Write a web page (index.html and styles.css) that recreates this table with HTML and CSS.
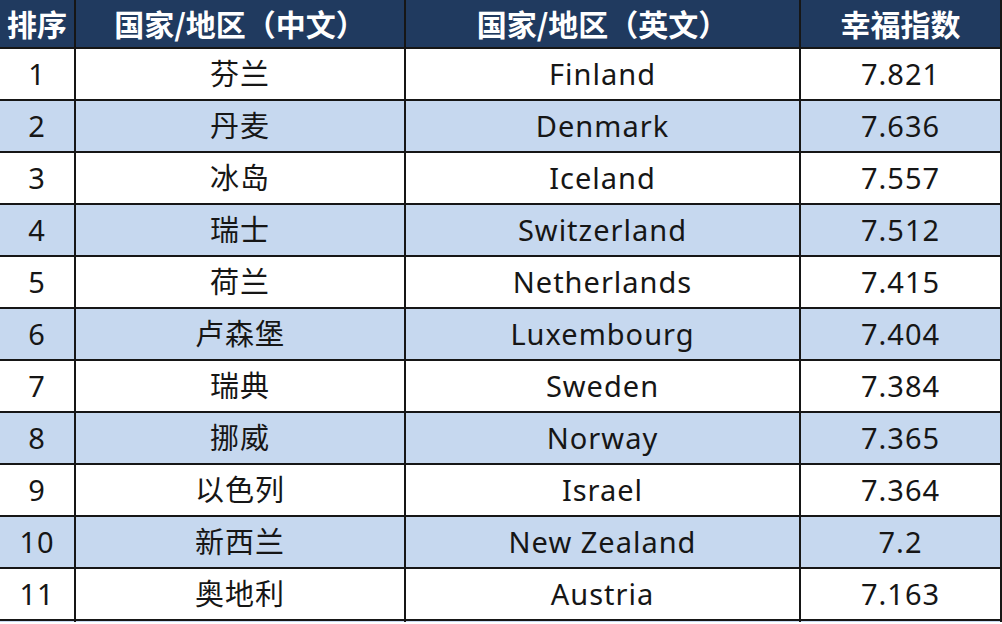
FILE: index.html
```html
<!DOCTYPE html>
<html lang="zh">
<head>
<meta charset="utf-8">
<title>幸福指数</title>
<link rel="stylesheet" href="styles.css">
</head>
<body>
<table class="rank">
  <colgroup>
    <col class="c-rank"><col class="c-cn"><col class="c-en"><col class="c-score">
  </colgroup>
  <thead>
    <tr><th>排序</th><th>国家/地区（中文）</th><th>国家/地区（英文）</th><th>幸福指数</th></tr>
  </thead>
  <tbody>
    <tr><td>1</td><td>芬兰</td><td>Finland</td><td>7.821</td></tr>
    <tr class="alt"><td>2</td><td>丹麦</td><td>Denmark</td><td>7.636</td></tr>
    <tr><td>3</td><td>冰岛</td><td>Iceland</td><td>7.557</td></tr>
    <tr class="alt"><td>4</td><td>瑞士</td><td>Switzerland</td><td>7.512</td></tr>
    <tr><td>5</td><td>荷兰</td><td>Netherlands</td><td>7.415</td></tr>
    <tr class="alt"><td>6</td><td>卢森堡</td><td>Luxembourg</td><td>7.404</td></tr>
    <tr><td>7</td><td>瑞典</td><td>Sweden</td><td>7.384</td></tr>
    <tr class="alt"><td>8</td><td>挪威</td><td>Norway</td><td>7.365</td></tr>
    <tr><td>9</td><td>以色列</td><td>Israel</td><td>7.364</td></tr>
    <tr class="alt"><td>10</td><td>新西兰</td><td>New Zealand</td><td>7.2</td></tr>
    <tr><td>11</td><td>奥地利</td><td>Austria</td><td>7.163</td></tr>
    <tr class="alt stub"><td></td><td></td><td></td><td></td></tr>
  </tbody>
</table>
</body>
</html>
```
FILE: styles.css
```css
html, body {
  margin: 0;
  padding: 0;
  background: #ffffff;
  overflow: hidden;
}
.rank {
  border-collapse: collapse;
  table-layout: fixed;
  width: 1001px;
  font-family: "Noto Sans", "Noto Sans CJK SC", sans-serif;
  color: #161616;
}
.c-rank { width: 75px; }
.c-cn { width: 330px; }
.c-en { width: 395px; }
.c-score { width: 201px; }
.rank th, .rank td {
  border: 2px solid #161616;
  text-align: center;
  padding: 0;
  white-space: nowrap;
}
.rank tr > :first-child { border-left: none; }
.rank thead tr > * { border-top: none; }
.rank th {
  background: #203a5f;
  color: #ffffff;
  font-family: "Noto Sans CJK SC", sans-serif;
  font-weight: 700;
  font-size: 30px;
  height: 47px;
  line-height: 47px;
}
.rank td {
  height: 50px;
  line-height: 50px;
  font-size: 29px;
  letter-spacing: 1px;
}
.rank tr.alt td { background: #c6d8ef; }
.rank tr.stub td {
  height: 1px;
  line-height: 0;
  border-bottom: none;
}
```
